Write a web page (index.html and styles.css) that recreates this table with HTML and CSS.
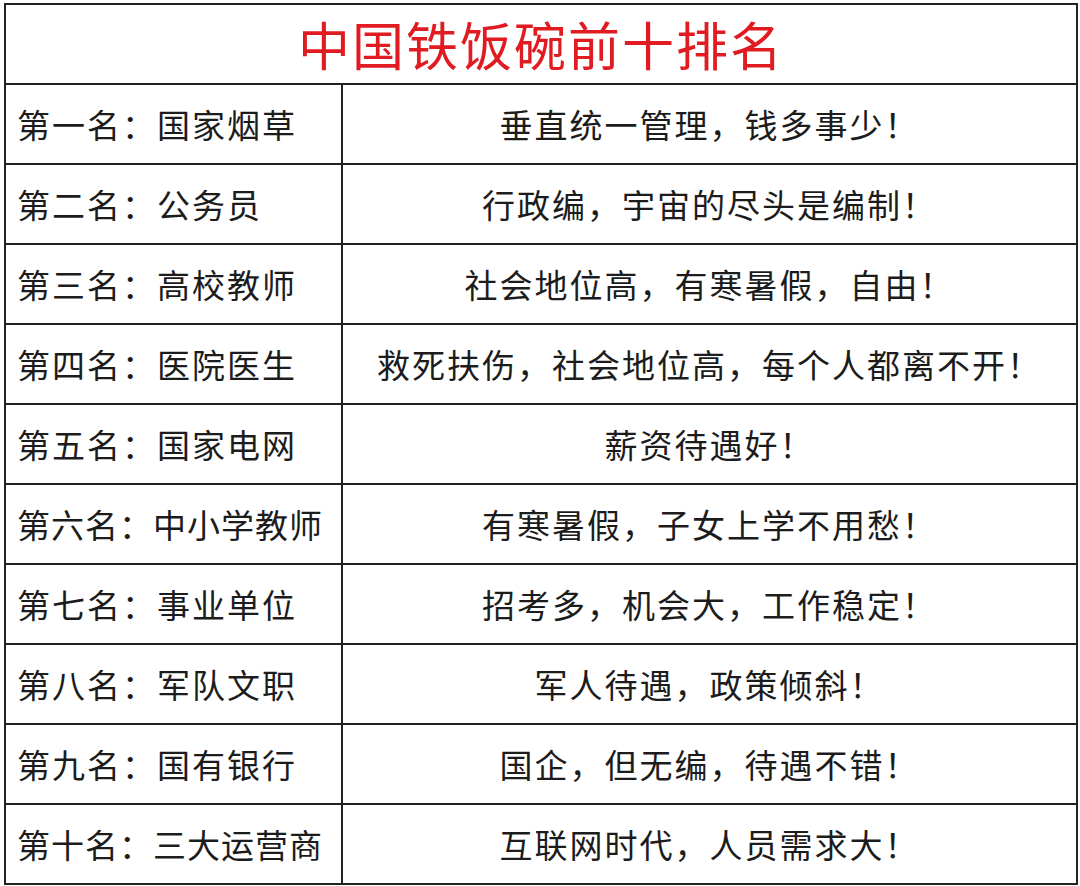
FILE: index.html
```html
<!DOCTYPE html>
<html lang="zh-CN">
<head>
<meta charset="utf-8">
<title>中国铁饭碗前十排名</title>
<link rel="stylesheet" href="styles.css">
</head>
<body>
<table class="rank">
  <colgroup><col class="col-name"><col class="col-desc"></colgroup>
  <tr class="title-row"><th colspan="2" class="title">中国铁饭碗前十排名</th></tr>
  <tr><td class="name">第一名：国家烟草</td><td class="desc">垂直统一管理，钱多事少！</td></tr>
  <tr><td class="name">第二名：公务员</td><td class="desc">行政编，宇宙的尽头是编制！</td></tr>
  <tr><td class="name">第三名：高校教师</td><td class="desc">社会地位高，有寒暑假，自由！</td></tr>
  <tr><td class="name">第四名：医院医生</td><td class="desc">救死扶伤，社会地位高，每个人都离不开！</td></tr>
  <tr><td class="name">第五名：国家电网</td><td class="desc">薪资待遇好！</td></tr>
  <tr><td class="name tight">第六名：中小学教师</td><td class="desc">有寒暑假，子女上学不用愁！</td></tr>
  <tr><td class="name">第七名：事业单位</td><td class="desc">招考多，机会大，工作稳定！</td></tr>
  <tr><td class="name">第八名：军队文职</td><td class="desc">军人待遇，政策倾斜！</td></tr>
  <tr><td class="name">第九名：国有银行</td><td class="desc">国企，但无编，待遇不错！</td></tr>
  <tr><td class="name tight">第十名：三大运营商</td><td class="desc">互联网时代，人员需求大！</td></tr>
</table>
</body>
</html>
```
FILE: styles.css
```css
html, body {
  margin: 0;
  background: #ffffff;
}
body {
  padding: 3px 4px;
  font-family: "Noto Sans CJK SC", "Noto Sans", sans-serif;
  color: #1c1c1c;
}
.rank {
  width: 1072px;
  border-collapse: collapse;
  table-layout: fixed;
}
.col-name {
  width: 337px;
}
.col-desc {
  width: 735px;
}
.rank th, .rank td {
  border: 2px solid #222;
  height: 78px;
  padding: 0;
  vertical-align: middle;
}
.title {
  color: #e01b22;
  font-size: 52px;
  font-weight: 400;
  letter-spacing: 2px;
  text-align: center;
  line-height: 1;
}
.name {
  padding-left: 11px !important;
  font-size: 33px;
  letter-spacing: 2px;
  text-align: left;
  white-space: nowrap;
}
.name.tight {
  letter-spacing: 1px;
}
.desc {
  font-size: 33px;
  letter-spacing: 2px;
  text-align: center;
  white-space: nowrap;
}
```
